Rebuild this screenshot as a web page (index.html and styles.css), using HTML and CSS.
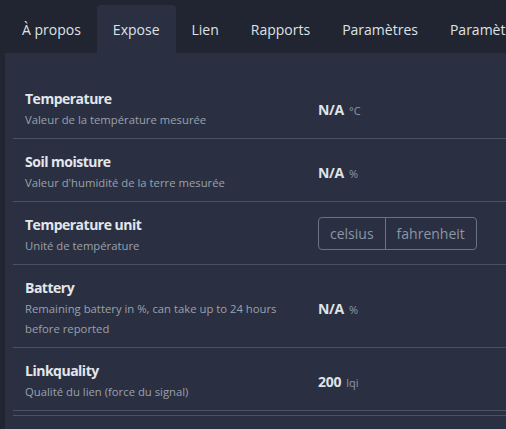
FILE: index.html
```html
<!DOCTYPE html>
<html lang="fr">
<head>
<meta charset="utf-8">
<link rel="stylesheet" href="styles.css">
</head>
<body>
<nav class="tabs">
  <a class="tab">À propos</a>
  <a class="tab active">Expose</a>
  <a class="tab">Lien</a>
  <a class="tab">Rapports</a>
  <a class="tab">Paramètres</a>
  <a class="tab">Paramètres (spécifiques)</a>
</nav>
<main class="card">
  <div class="row">
    <div class="label">
      <div class="title">Temperature</div>
      <div class="desc">Valeur de la température mesurée</div>
    </div>
    <div class="value"><strong>N/A</strong><span class="unit">°C</span></div>
  </div>
  <div class="row">
    <div class="label">
      <div class="title">Soil moisture</div>
      <div class="desc">Valeur d'humidité de la terre mesurée</div>
    </div>
    <div class="value"><strong>N/A</strong><span class="unit">%</span></div>
  </div>
  <div class="row">
    <div class="label">
      <div class="title">Temperature unit</div>
      <div class="desc">Unité de température</div>
    </div>
    <div class="value">
      <div class="btn-group">
        <button class="btn">celsius</button>
        <button class="btn">fahrenheit</button>
      </div>
    </div>
  </div>
  <div class="row">
    <div class="label">
      <div class="title">Battery</div>
      <div class="desc">Remaining battery in %, can take up to 24 hours before reported</div>
    </div>
    <div class="value"><strong>N/A</strong><span class="unit">%</span></div>
  </div>
  <div class="row">
    <div class="label">
      <div class="title">Linkquality</div>
      <div class="desc">Qualité du lien (force du signal)</div>
    </div>
    <div class="value"><strong>200</strong><span class="unit">lqi</span></div>
  </div>
  <div class="footer"></div>
</main>
</body>
</html>
```
FILE: styles.css
```css
html, body {
  margin: 0;
  padding: 0;
  overflow: hidden;
}
body {
  background: #212531;
  font-family: "Open Sans", "Noto Sans", sans-serif;
  color: #dfe2e7;
  width: 640px;
}
.tabs {
  display: flex;
  height: 53px;
  padding: 5px 0 0 6px;
  box-sizing: border-box;
  white-space: nowrap;
}
.tab {
  flex: none;
  display: flex;
  align-items: center;
  padding: 0 16px;
  font-size: 14px;
  color: #dfe2e7;
  border-radius: 4px 4px 0 0;
}
.tab.active {
  background: #2a3042;
}
.card {
  margin-left: 5px;
  background: #2a3042;
  padding: 23px 8px 20px 8px;
  min-height: 400px;
}
.row {
  display: grid;
  grid-template-columns: 293px 1fr;
  align-items: center;
  padding: 12px 12px 8px 12px;
  border-bottom: 1px solid #4b5263;
}
.label {
  padding-right: 20px;
}
.title {
  font-size: 14px;
  font-weight: 700;
  line-height: 22px;
  letter-spacing: -0.5px;
  color: #e3e6ea;
}
.desc {
  font-size: 11.3px;
  line-height: 20px;
  color: #9ba1ab;
}
.value strong {
  font-size: 14px;
  font-weight: 700;
  letter-spacing: -0.3px;
  color: #dfe2e7;
}
.unit {
  margin-left: 5px;
  font-size: 11px;
  color: #8e97a5;
}
.btn-group {
  display: inline-flex;
  margin-top: -4px;
  border: 1px solid #6b7282;
  border-radius: 4px;
  height: 33px;
  box-sizing: border-box;
}
.btn {
  background: transparent;
  border: none;
  font-family: inherit;
  font-size: 14px;
  color: #8b96a6;
  padding: 0 11px;
}
.btn + .btn {
  border-left: 1px solid #6b7282;
}
.footer {
  margin-top: 4px;
  border-top: 1px solid #4b5263;
}
```
